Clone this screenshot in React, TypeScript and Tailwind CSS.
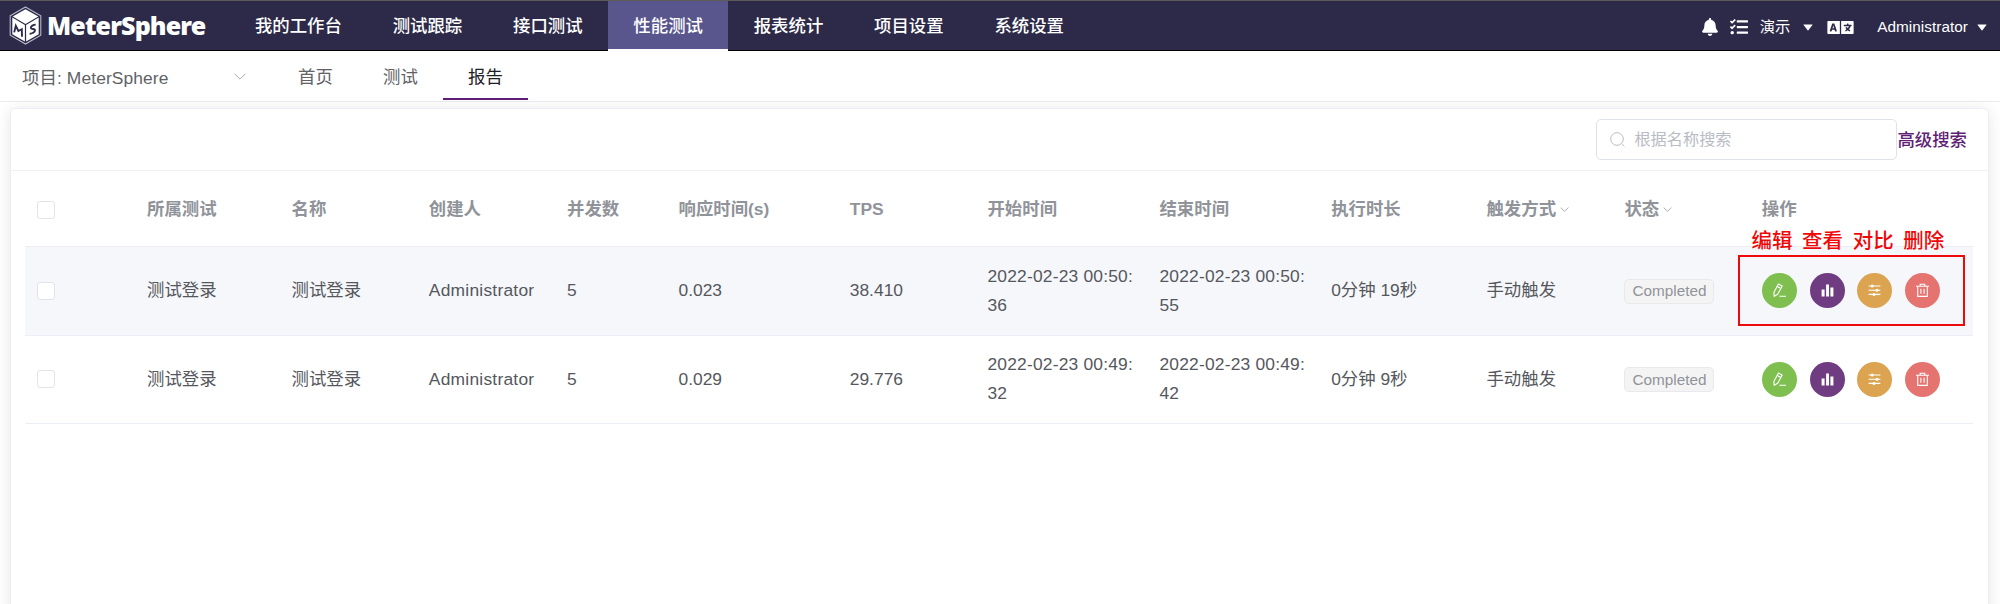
import type { ReactNode } from "react";
import { FaBell, FaLanguage, FaTasks } from "react-icons/fa";

const navItems = ["我的工作台", "测试跟踪", "接口测试", "性能测试", "报表统计", "项目设置", "系统设置"];
const tabs = ["首页", "测试", "报告"];
const columns = [59, 51, 144.5, 137.3, 138.2, 111.5, 171.3, 137.7, 172, 171.7, 155.3, 138, 137.3, 223.2];
const headings = ["所属测试", "名称", "创建人", "并发数", "响应时间(s)", "TPS", "开始时间", "结束时间", "执行时长"];

const reports = [
  { rt: "0.023", tps: "38.410", start: ["2022-02-23 00:50:", "36"], end: ["2022-02-23 00:50:", "55"], duration: "0分钟 19秒", active: true },
  { rt: "0.029", tps: "29.776", start: ["2022-02-23 00:49:", "32"], end: ["2022-02-23 00:49:", "42"], duration: "0分钟 9秒", active: false },
];

function Logo() {
  return (
    <svg className="h-[39px] w-[33px] shrink-0" viewBox="0 0 33 39" fill="none">
      <path d="M16.5 1 31.8 9.8v19.4L16.5 38 1.2 29.2V9.8z" stroke="#b9b9c9" strokeWidth="1.1" />
      <path d="M16.5 3.2 29.3 10.6 16.5 18 3.7 10.6z" fill="#fff" />
      <path d="M3.3 11.6 15.9 19v16.6L3.3 28.3z" fill="#fff" />
      <path d="M29.7 11.6 17.1 19v16.6l12.6-7.3z" fill="#fff" />
      <path d="M5.2 26.4 6.8 19.8l2.6 5.2 3.4-1.8.2 7.6" stroke="#2c2a48" strokeWidth="1.9" />
      <path d="M26.7 18.6c-2.2 0-5 1.7-4.9 3.4.1 1.5 4.4.4 4.2 2.3-.2 2-3.2 3.5-5.4 3.5" stroke="#2c2a48" strokeWidth="1.9" />
    </svg>
  );
}

function Caret({ className }: { className: string }) {
  return (
    <svg className={`h-[7px] w-[10px] shrink-0 ${className}`} viewBox="0 0 10 7">
      <path d="M.8.4h8.4q.6 0 .2.6L5.4 6.3q-.4.5-.8 0L.6 1Q.2.4.8.4z" fill="#fff" />
    </svg>
  );
}

function Chevron({ className }: { className: string }) {
  return (
    <svg className={className} viewBox="0 0 12 7" fill="none" stroke="currentColor">
      <path d="M.7.8 6 6.1 11.3.8" vectorEffect="non-scaling-stroke" />
    </svg>
  );
}

function Checkbox() {
  return <span className="block size-[18px] rounded-[3px] border border-[#e2e4ea] bg-white" />;
}

function RoundButton({ color, children }: { color: string; children: ReactNode }) {
  return (
    <button className={`flex size-[35px] items-center justify-center rounded-full ${color}`}>
      <svg className="size-[15px]" viewBox="0 0 15 15" fill="none" stroke="#fff" strokeWidth="1.1">
        {children}
      </svg>
    </button>
  );
}

function Actions() {
  return (
    <div className="flex gap-[12.6px]">
      <RoundButton color="bg-[#7ebf50]">
        <path d="M6.4 1 10.2 3.1 5.7 11.3 2.2 13.4 1.9 9.4z" strokeLinejoin="round" />
        <path d="M5.2 3.4 9 5.5M7.4 13.2h6.6" />
      </RoundButton>
      <RoundButton color="bg-[#6f3c82]">
        <path d="M1.6 6.5h3v7h-3zM6.1 1.5H9v12H6.1zM10.4 4.5h3v9h-3z" fill="#fff" stroke="none" />
      </RoundButton>
      <RoundButton color="bg-[#dca450]">
        <path d="M1.6 3h11.8M1.6 7.2h11.8M1.6 11.4h11.8" />
        <circle cx="5.2" cy="3" r="1.5" fill="#fff" stroke="none" />
        <circle cx="10" cy="7.2" r="1.5" fill="#fff" stroke="none" />
        <circle cx="7" cy="11.4" r="1.5" fill="#fff" stroke="none" />
      </RoundButton>
      <RoundButton color="bg-[#e57470]">
        <path d="M1 3.2h13M2.7 3.2v10.2h9.6V3.2M5.2 3V1.2h4.6V3M5.9 5.8v5M9.1 5.8v5" />
      </RoundButton>
    </div>
  );
}

export default function App() {
  return (
    <div className="relative flex h-[604px] w-[2000px] flex-col overflow-hidden bg-white font-['Liberation_Sans','Noto_Sans_CJK_SC',sans-serif] text-[17.4px] text-[#606266]">
      <header className="flex h-[51px] shrink-0 border-t border-b border-t-[#5c5b5a] border-b-black bg-[#2c2a48] text-white">
        <div className="flex w-[229.5px] items-center pl-[9px]">
          <Logo />
          <span className="ml-[5px] font-['Noto_Sans',sans-serif] text-[25px] leading-none font-black tracking-[-0.85px]">MeterSphere</span>
        </div>
        <nav className="flex">
          {navItems.map((item) => (
            <div
              key={item}
              className={`flex h-[50px] items-center px-[25.4px] pt-[3px] font-medium ${item === "性能测试" ? "border-b-2 border-white bg-[#59568e]" : "border-b-2 border-transparent"}`}
            >
              {item}
            </div>
          ))}
        </nav>
        <div className="ml-auto flex items-center pt-[3px] pr-[13px] text-[15.3px]">
          <FaBell className="size-[18px]" />
          <FaTasks className="ml-[11px] size-[18px]" />
          <span className="ml-[12px]">演示</span>
          <Caret className="ml-[13px]" />
          <FaLanguage className="ml-[14px] h-[21px] w-[27px]" />
          <span className="ml-[23px] tracking-[0.05px]">Administrator</span>
          <Caret className="ml-[9px]" />
        </div>
      </header>

      <div className="flex h-[51px] shrink-0 border-b border-[#ececf0]">
        <div className="flex w-[273px] items-center pt-[3px] pl-[22px]">
          <span className="w-[212px] pt-px tracking-[0.1px]">项目: MeterSphere</span>
          <Chevron className="mb-[3px] h-[7px] w-[12px] text-[#a8abb2]" />
        </div>
        {tabs.map((tab) => (
          <div
            key={tab}
            className={`flex h-[49px] w-[85px] items-center justify-center border-b-2 pt-[5px] ${tab === "报告" ? "border-[#5f1f75] text-[#1f2025]" : "border-transparent"}`}
          >
            {tab}
          </div>
        ))}
      </div>

      <main className="mt-[6px] ml-[10px] h-[520px] w-[1979px] shrink-0 rounded-[5px] border border-[#ebeef5] bg-white shadow-[0_2px_15px_rgba(0,0,0,0.1)]">
        <div className="flex h-[62px] items-center justify-end border-b border-[#f0f1f5] pr-[21px]">
          <div className="flex h-[41px] w-[301px] items-center rounded-[5px] border border-[#dfe2e8] pl-[13px] text-[16.2px] text-[#b9bcc4]">
            <svg className="mr-[9px] size-[15px]" viewBox="0 0 15 15" fill="none" stroke="currentColor">
              <circle cx="7" cy="7" r="6.3" />
              <path d="m11.6 11.6 2.8 2.8" />
            </svg>
            根据名称搜索
          </div>
          <span className="pt-px font-medium text-[#5f1f75]">高级搜索</span>
        </div>
        <div className="px-[14px]">
          <table className="w-[1948px] table-fixed border-collapse text-left leading-[28.7px]">
            <colgroup>
              {columns.map((width, i) => (
                <col key={i} style={{ width }} />
              ))}
            </colgroup>
            <thead>
              <tr className="h-[75px] border-b border-[#ebeef5] text-[#909399]">
                <th className="pt-[3px] pl-[12px]"><Checkbox /></th>
                <th />
                {headings.map((h) => (
                  <th key={h} className="pt-[2px] pl-[12px] font-bold">{h}</th>
                ))}
                {["触发方式", "状态"].map((h) => (
                  <th key={h} className="pt-[2px] pl-[12px] font-bold">
                    <span className="flex items-center">
                      {h}
                      <Chevron className="ml-[4px] h-[5px] w-[9px] text-[#a8abb2]" />
                    </span>
                  </th>
                ))}
                <th className="pt-[2px] pl-[12px] font-bold">操作</th>
              </tr>
            </thead>
            <tbody className="text-[#55575d]">
              {reports.map((r) => (
                <tr key={r.rt} className={`border-b border-[#ebeef5] ${r.active ? "h-[89px] bg-[#f5f7fa]" : "h-[88px]"}`}>
                  <td className="pl-[12px]"><Checkbox /></td>
                  <td />
                  <td className="pl-[12px]">测试登录</td>
                  <td className="pl-[12px]">测试登录</td>
                  <td className="pl-[12px] tracking-[0.24px]">Administrator</td>
                  <td className="pl-[12px]">5</td>
                  <td className="pl-[12px]">{r.rt}</td>
                  <td className="pl-[12px]">{r.tps}</td>
                  {[r.start, r.end].map((lines, i) => (
                    <td key={i} className="pl-[12px] tracking-[0.2px] whitespace-nowrap">
                      {lines[0]}<br />{lines[1]}
                    </td>
                  ))}
                  <td className="pl-[12px]">{r.duration}</td>
                  <td className="pl-[12px]">手动触发</td>
                  <td className="pl-[12px]">
                    <span className="flex h-[29px] w-[90px] items-center">
                      <span className="mt-px flex h-[25px] w-[90px] items-center justify-center rounded-[5px] border border-[#e9e9eb] bg-[#f4f4f5] pt-px text-[15.3px] text-[#909399]">
                        Completed
                      </span>
                    </span>
                  </td>
                  <td className="pl-[12.5px]"><Actions /></td>
                </tr>
              ))}
            </tbody>
          </table>
        </div>
      </main>

      <div className="absolute top-[226px] left-[1751.5px] flex gap-[9.6px] text-[20.5px] leading-[30px] font-medium whitespace-nowrap text-[#f00808]">
        <span>编辑</span>
        <span>查看</span>
        <span>对比</span>
        <span>删除</span>
      </div>
      <div className="absolute top-[255px] left-[1738px] h-[71px] w-[227px] border-2 border-[#ee0a0a]" />
    </div>
  );
}
